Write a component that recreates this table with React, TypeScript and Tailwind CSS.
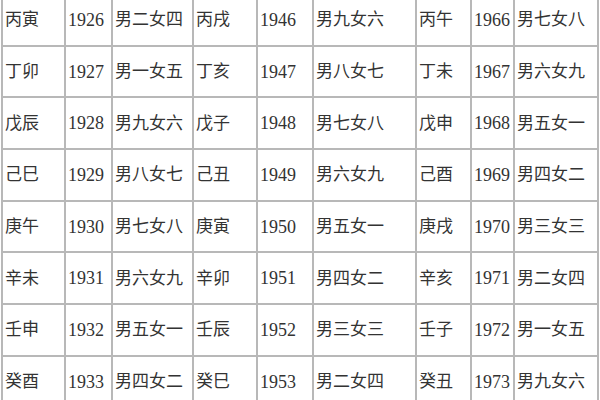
const rows: [string, string, string, string, string, string, string, string, string][] = [
  ["丙寅", "1926", "男二女四", "丙戌", "1946", "男九女六", "丙午", "1966", "男七女八"],
  ["丁卯", "1927", "男一女五", "丁亥", "1947", "男八女七", "丁未", "1967", "男六女九"],
  ["戊辰", "1928", "男九女六", "戊子", "1948", "男七女八", "戊申", "1968", "男五女一"],
  ["己巳", "1929", "男八女七", "己丑", "1949", "男六女九", "己酉", "1969", "男四女二"],
  ["庚午", "1930", "男七女八", "庚寅", "1950", "男五女一", "庚戌", "1970", "男三女三"],
  ["辛未", "1931", "男六女九", "辛卯", "1951", "男四女二", "辛亥", "1971", "男二女四"],
  ["壬申", "1932", "男五女一", "壬辰", "1952", "男三女三", "壬子", "1972", "男一女五"],
  ["癸酉", "1933", "男四女二", "癸巳", "1953", "男二女四", "癸丑", "1973", "男九女六"],
]

const widths = ["w-[63px]", "w-[47px]", "w-[81px]", "w-[64px]", "w-[56px]", "w-[103px]", "w-[55px]", "w-[43px]", "w-[84px]"]

export default function App() {
  return (
    <div className="w-[600px] h-[400px] overflow-hidden bg-white">
      <table
        className="-mt-[7px] ml-[1px] table-fixed border-collapse text-[17px] text-[#333333]"
        style={{ fontFamily: '"Liberation Serif", "Noto Sans CJK SC", serif' }}
      >
        <colgroup>
          {widths.map((w, i) => (
            <col key={i} className={w} />
          ))}
        </colgroup>
        <tbody>
          {rows.map((row, r) => (
            <tr key={r} className="h-[51.7px]">
              {row.map((cell, c) => (
                <td
                  key={c}
                  className={
                    c % 3 === 1
                      ? "border-2 border-[#b8b8b8] pl-[2px] align-middle whitespace-nowrap leading-none text-[18px]"
                      : "border-2 border-[#b8b8b8] pl-[2px] align-middle whitespace-nowrap leading-none"
                  }
                >
                  {cell}
                </td>
              ))}
            </tr>
          ))}
        </tbody>
      </table>
    </div>
  )
}
